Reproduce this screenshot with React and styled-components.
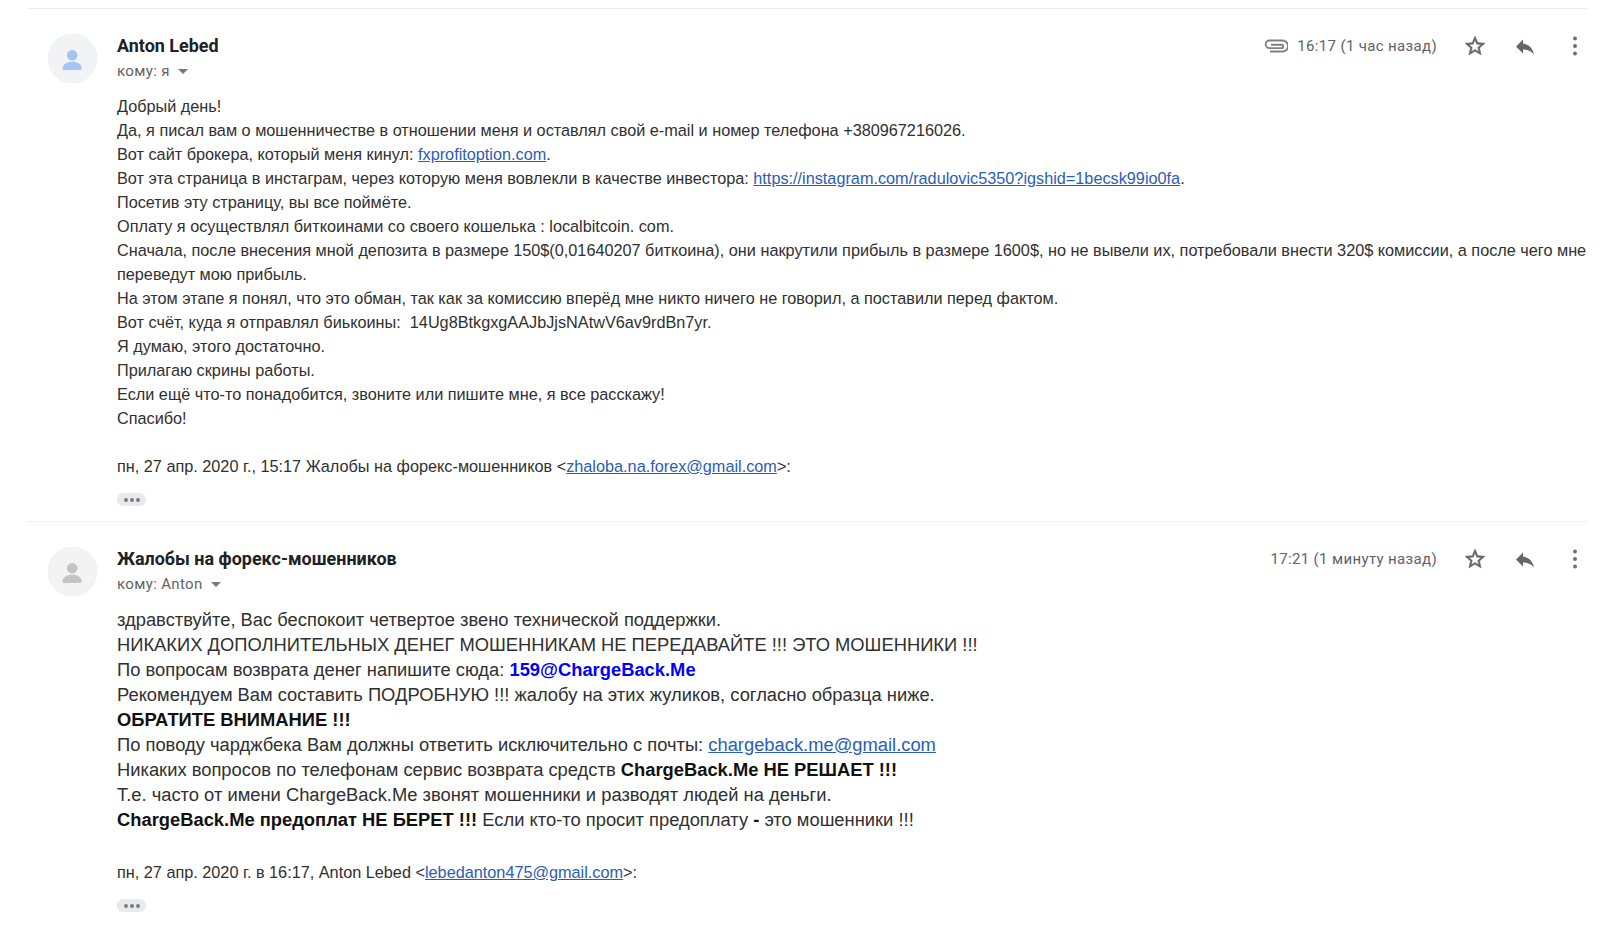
import React from "react";
import styled, { createGlobalStyle } from "styled-components";

const GlobalStyle = createGlobalStyle`
  html, body {
    margin: 0;
    background: #fff;
    height: 100%;
    overflow: hidden;
  }
`;

const Page = styled.div`
  padding: 8px 18px 0 28px;
  font-family: "Liberation Sans", Arial, sans-serif;
  color: #222;
`;

const Message = styled.section`
  border-top: 1px solid #eceded;
  display: grid;
  grid-template-columns: 89px 1fr;
  padding-top: 25px;
  height: ${(p) => p.$height}px;
  box-sizing: border-box;
`;

const Avatar = styled.div`
  width: 49px;
  height: 49px;
  margin-left: 19.5px;
  border-radius: 50%;
  background: ${(p) => (p.$blue ? "#f1f3f4" : "#f3f3f3")};
  display: flex;
  align-items: center;
  justify-content: center;
  box-shadow: 0 0 1px rgba(0, 0, 0, 0.12);
`;

const Head = styled.div`
  display: flex;
  justify-content: space-between;
  align-items: flex-start;
  padding-top: 1px;
`;

const Sender = styled.div`
  font-family: Roboto, sans-serif;
  font-weight: 700;
  font-size: 17.95px;
  line-height: 22px;
  color: #202124;
`;

const Recipient = styled.div`
  font-family: Roboto, sans-serif;
  font-size: 15px;
  line-height: 20px;
  margin-top: 4px;
  color: #5f6368;
  letter-spacing: 0.35px;
  display: flex;
  align-items: center;
  gap: 8px;
`;

const Caret = styled.span`
  width: 0;
  height: 0;
  border-left: 5px solid transparent;
  border-right: 5px solid transparent;
  border-top: 5px solid #777;
  margin-top: 1px;
`;

const Meta = styled.div`
  display: flex;
  align-items: center;
  height: 22px;
  color: #5f6368;
`;

const Time = styled.span`
  font-family: Roboto, sans-serif;
  font-size: 15px;
  letter-spacing: 0.35px;
  margin: 0 26px 0 9px;
`;

const IconSlot = styled.span`
  display: flex;
  justify-content: center;
  width: 24px;
  margin-left: ${(p) => p.$gap || 0}px;
`;

const Body = styled.div`
  margin-top: 13px;
  font-size: ${(p) => p.$size}px;
  line-height: ${(p) => p.$line}px;
  color: #303030;
`;

const Line = styled.div``;

const Link = styled.a`
  color: #2a5db8;
  text-decoration: underline;
`;

const BlueLink = styled.span`
  color: #0000ff;
  font-weight: 700;
`;

const Strong = styled.b`
  color: #111;
`;

const Quote = styled.div`
  font-size: 16.25px;
  line-height: 24px;
  margin-top: ${(p) => p.$top}px;
  color: #303030;
`;

const More = styled.div`
  width: 29px;
  height: 13px;
  margin-top: 15px;
  border-radius: 6px;
  background: #e8eaed;
  display: flex;
  align-items: center;
  justify-content: center;
  gap: 2px;
`;

const Dot = styled.i`
  width: 4px;
  height: 4px;
  border-radius: 50%;
  background: #7a7d81;
`;

const PersonIcon = ({ color }) => (
  <svg width="24" height="24" viewBox="0 0 24 24" fill={color}>
    <circle cx="12.200" cy="8.300" r="5.300" />
    <path d="M2.700 21.500c0-4.600 4.200-6.800 9.500-6.800s9.500 2.200 9.500 6.800c0 1-.5 1.500-1.500 1.500h-16c-1 0-1.500-.5-1.500-1.500z" />
  </svg>
);

const ClipIcon = () => (
  <svg width="24" height="16" viewBox="0 0 24 16" fill="none" stroke="#808080" strokeWidth="1.9">
    <path d="M6 13.500h12.500a5 5 0 0 0 0-11H5.500a3.800 3.800 0 0 0 0 7.600h12a1.700 1.700 0 0 0 0-3.400H7" />
  </svg>
);

const StarIcon = () => (
  <svg width="26" height="26" viewBox="0 0 24 24" fill="#666" stroke="#666" strokeWidth="0.5">
    <path d="M22 9.240l-7.190-.62L12 2 9.190 8.630 2 9.240l5.460 4.730L5.820 21 12 17.270 18.180 21l-1.630-7.030L22 9.240zM12 15.400l-3.760 2.270 1-4.280-3.320-2.880 4.380-.38L12 6.100l1.710 4.040 4.380.38-3.320 2.880 1 4.280L12 15.400z" />
  </svg>
);

const ReplyIcon = () => (
  <svg width="25" height="25" viewBox="0 0 24 24" fill="#666">
    <path d="M10 9V5l-7 7 7 7v-4.100c5 0 8.500 1.600 11 5.100-1-5-4-10-11-11z" />
  </svg>
);

const MoreIcon = () => (
  <svg width="24" height="24" viewBox="0 0 24 24" fill="#707070">
    <circle cx="12" cy="4.500" r="2" />
    <circle cx="12" cy="12" r="2" />
    <circle cx="12" cy="19.500" r="2" />
  </svg>
);

const Actions = () => (
  <>
    <IconSlot>
      <StarIcon />
    </IconSlot>
    <IconSlot $gap={26}>
      <ReplyIcon />
    </IconSlot>
    <IconSlot $gap={26}>
      <MoreIcon />
    </IconSlot>
  </>
);

const Dots = () => (
  <More>
    <Dot />
    <Dot />
    <Dot />
  </More>
);

const App = () => (
  <Page>
    <GlobalStyle />
    <Message $height={513}>
      <Avatar $blue>
        <PersonIcon color="#a8c4f5" />
      </Avatar>
      <div>
        <Head>
          <div>
            <Sender>Anton Lebed</Sender>
            <Recipient>
              кому: я <Caret />
            </Recipient>
          </div>
          <Meta>
            <ClipIcon />
            <Time>16:17 (1 час назад)</Time>
            <Actions />
          </Meta>
        </Head>
        <Body $size={16.25} $line={24}>
          <Line>Добрый день!</Line>
          <Line>Да, я писал вам о мошенничестве в отношении меня и оставлял свой e-mail и номер телефона +380967216026.</Line>
          <Line>
            Вот сайт брокера, который меня кинул: <Link>fxprofitoption.com</Link>.
          </Line>
          <Line>
            Вот эта страница в инстаграм, через которую меня вовлекли в качестве инвестора:{" "}
            <Link>https://instagram.com/radulovic5350?igshid=1becsk99io0fa</Link>.
          </Line>
          <Line>Посетив эту страницу, вы все поймёте.</Line>
          <Line>Оплату я осуществлял биткоинами со своего кошелька : localbitcoin. com.</Line>
          <Line>
            Сначала, после внесения мной депозита в размере 150$(0,01640207 биткоина), они накрутили прибыль в размере 1600$, но не вывели их, потребовали внести 320$ комиссии, а после чего мне переведут мою прибыль.
          </Line>
          <Line>На этом этапе я понял, что это обман, так как за комиссию вперёд мне никто ничего не говорил, а поставили перед фактом.</Line>
          <Line>Вот счёт, куда я отправлял биькоины:&nbsp; 14Ug8BtkgxgAAJbJjsNAtwV6av9rdBn7yr.</Line>
          <Line>Я думаю, этого достаточно.</Line>
          <Line>Прилагаю скрины работы.</Line>
          <Line>Если ещё что-то понадобится, звоните или пишите мне, я все расскажу!</Line>
          <Line>Спасибо!</Line>
        </Body>
        <Quote $top={24}>
          пн, 27 апр. 2020 г., 15:17 Жалобы на форекс-мошенников &lt;<Link>zhaloba.na.forex@gmail.com</Link>&gt;:
        </Quote>
        <Dots />
      </div>
    </Message>
    <Message $height={420}>
      <Avatar>
        <PersonIcon color="#c4c4c4" />
      </Avatar>
      <div>
        <Head>
          <div>
            <Sender>Жалобы на форекс-мошенников</Sender>
            <Recipient>
              кому: Anton <Caret />
            </Recipient>
          </div>
          <Meta>
            <Time>17:21 (1 минуту назад)</Time>
            <Actions />
          </Meta>
        </Head>
        <Body $size={18.35} $line={25}>
          <Line>здравствуйте, Вас беспокоит четвертое звено технической поддержки.</Line>
          <Line>НИКАКИХ ДОПОЛНИТЕЛЬНЫХ ДЕНЕГ МОШЕННИКАМ НЕ ПЕРЕДАВАЙТЕ !!! ЭТО МОШЕННИКИ !!!</Line>
          <Line>
            По вопросам возврата денег напишите сюда: <BlueLink>159@ChargeBack.Me</BlueLink>
          </Line>
          <Line>Рекомендуем Вам составить ПОДРОБНУЮ !!! жалобу на этих жуликов, согласно образца ниже.</Line>
          <Line>
            <Strong>ОБРАТИТЕ ВНИМАНИЕ !!!</Strong>
          </Line>
          <Line>
            По поводу чарджбека Вам должны ответить исключительно с почты: <Link>chargeback.me@gmail.com</Link>
          </Line>
          <Line>
            Никаких вопросов по телефонам сервис возврата средств <Strong>ChargeBack.Me НЕ РЕШАЕТ !!!</Strong>
          </Line>
          <Line>Т.е. часто от имени ChargeBack.Me звонят мошенники и разводят людей на деньги.</Line>
          <Line>
            <Strong>ChargeBack.Me предоплат НЕ БЕРЕТ !!!</Strong> Если кто-то просит предоплату <Strong>-</Strong> это мошенники !!!
          </Line>
        </Body>
        <Quote $top={28}>
          пн, 27 апр. 2020 г. в 16:17, Anton Lebed &lt;<Link>lebedanton475@gmail.com</Link>&gt;:
        </Quote>
        <Dots />
      </div>
    </Message>
  </Page>
);

export default App;
